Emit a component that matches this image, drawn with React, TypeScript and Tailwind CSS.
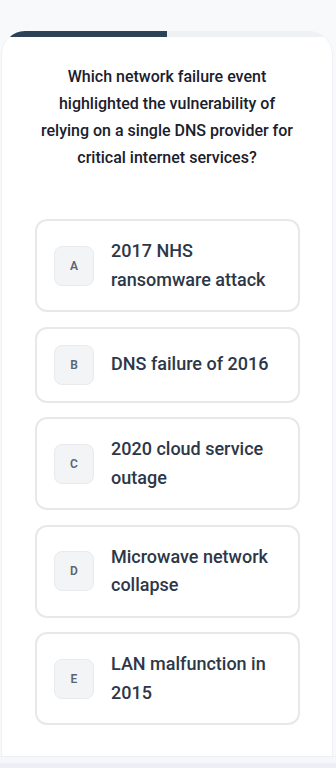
import React from "react";

const options = [
  { k: "A", t: "2017 NHS ransomware attack" },
  { k: "B", t: "DNS failure of 2016" },
  { k: "C", t: "2020 cloud service outage" },
  { k: "D", t: "Microwave network collapse" },
  { k: "E", t: "LAN malfunction in 2015" },
];

export default function App() {
  return (
    <div
      className="w-[336px] h-[768px] bg-[#f8f9fb] overflow-hidden flex flex-col"
      style={{ fontFamily: "Roboto, 'Liberation Sans', sans-serif" }}
    >
      <div className="h-[31px] shrink-0" />
      <div className="ml-[1px] mr-[3px] flex-1 bg-white rounded-t-[24px] overflow-hidden border-l border-r border-[#eef0f3] flex flex-col">
        <div className="h-[6px] bg-[#f0f1f4] flex shrink-0">
          <div className="w-[50%] bg-[#2c4257]" />
        </div>
        <div className="pt-[26px] px-[36px] text-center text-[16px] leading-[27px] font-medium text-[#1a202c]">
          Which network failure event highlighted the vulnerability of relying on a single DNS provider for critical internet services?
        </div>
        <div className="mt-[48px] flex flex-col gap-[14.5px] pl-[33px] pr-[32px]">
          {options.map((o) => (
            <div
              key={o.k}
              className="flex items-center gap-[17px] border-2 border-[#e6e8ec] rounded-[12px] py-4 pl-[17px] pr-[17px]"
            >
              <div className="w-[40px] h-[40px] shrink-0 rounded-[8px] bg-[#f3f4f6] border border-[#e8eaee] flex items-center justify-center text-[12px] font-semibold text-[#5b6472]">
                {o.k}
              </div>
              <div className="flex-1 text-[18px] leading-[28.5px] font-medium text-[#2d3748]">
                {o.t}
              </div>
            </div>
          ))}
        </div>
      </div>
      <div className="h-[7px] bg-[#f6f7fa] shrink-0 border-t border-[#eef0f3]" />
      <div className="h-[5px] bg-[#eeeef8] shrink-0" />
    </div>
  );
}
